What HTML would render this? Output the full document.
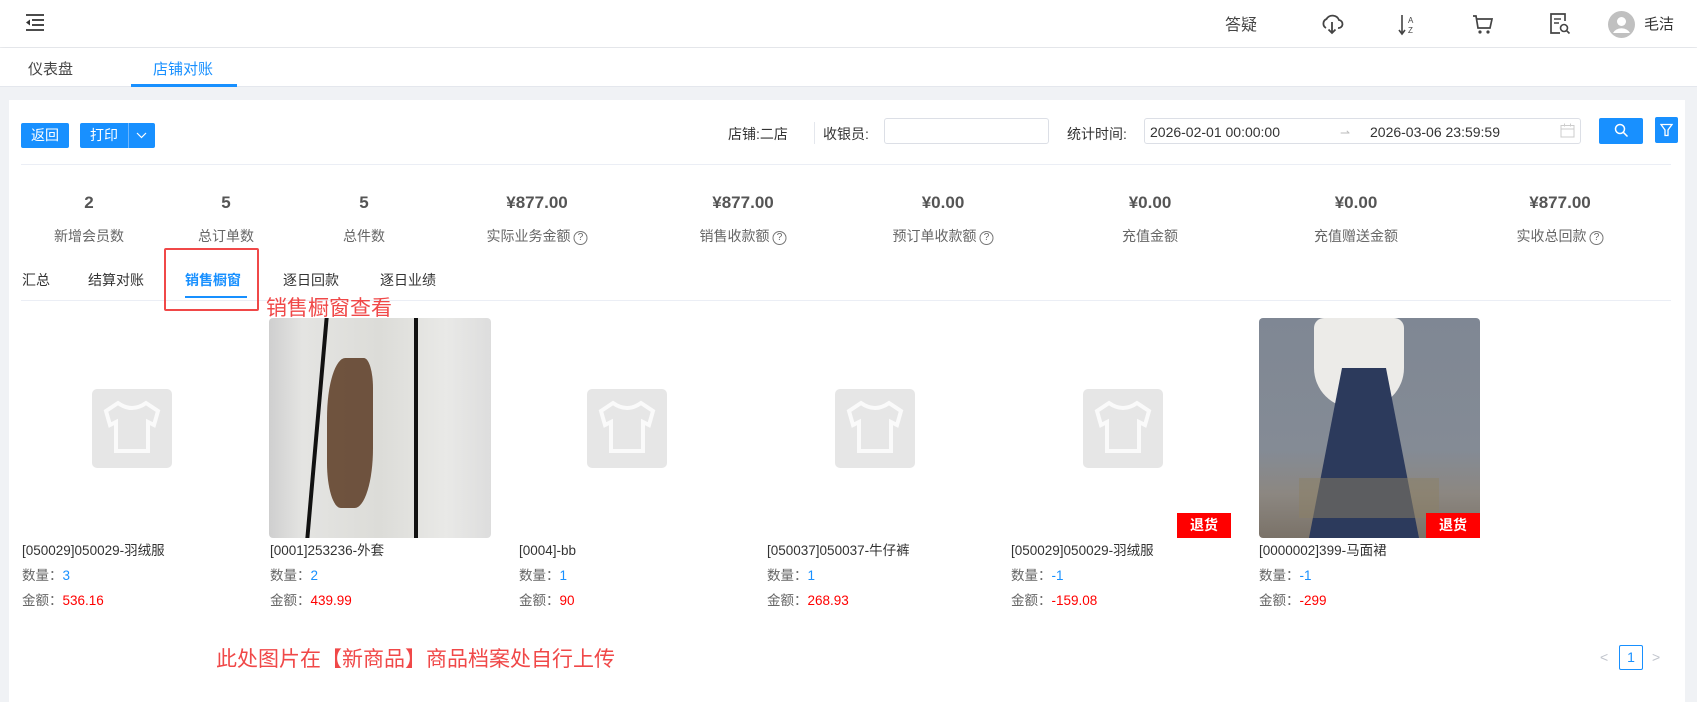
<!DOCTYPE html>
<html><head><meta charset="utf-8">
<style>
*{margin:0;padding:0;box-sizing:border-box}
body{width:1697px;height:702px;overflow:hidden;background:#f0f2f5;font-family:"Liberation Sans","Noto Sans CJK SC",sans-serif;font-size:14px;color:#333;position:relative}
.a{position:absolute;white-space:nowrap}
.hdr{position:absolute;left:0;top:0;width:1697px;height:47px;background:#fff;box-shadow:0 1px 4px rgba(0,0,0,.08)}
.tabs{position:absolute;left:0;top:48px;width:1697px;height:39px;background:#fff;border-bottom:1px solid #e4e7ed}
.card{position:absolute;left:9px;top:100px;width:1676px;height:602px;background:#fff}
.btn{position:absolute;background:#1890ff;color:#fff;border-radius:2px;font-size:14px;text-align:center;line-height:25px;height:25px;top:123px}
.inp{position:absolute;border:1px solid #dcdfe6;border-radius:3px;background:#fff}
.sv{position:absolute;top:193px;font-size:17px;color:#555;font-weight:bold;transform:translateX(-50%);white-space:nowrap}
.sl{position:absolute;top:226px;font-size:14px;color:#666;transform:translateX(-50%);white-space:nowrap}
.q{display:inline-block;width:14px;height:14px;border:1px solid #777;border-radius:50%;font-size:10px;line-height:12px;text-align:center;vertical-align:1px;margin-left:3px;color:#666}
.st{position:absolute;top:270px;font-size:14px;color:#333;white-space:nowrap}
.ph{position:absolute;width:80px;height:79px;background:#e6e6e6;border-radius:5px;top:389px}
.nm,.qt,.am{position:absolute;font-size:13.5px;white-space:nowrap;line-height:20px}
.nm{top:541px;color:#333}
.qt{top:566px;color:#666}
.qt span{color:#1890ff}
.am{top:591px;color:#666}
.am span{color:#f00}
.badge{position:absolute;width:54px;height:25px;background:#f00;color:#fff;font-weight:bold;font-size:14px;text-align:center;line-height:25px;top:513px}
</style></head><body>
<div class="hdr"></div>
<svg class="a" style="left:25px;top:12px" width="20" height="20" viewBox="0 0 20 20"><g stroke="#333" stroke-width="1.8"><line x1="1" y1="3" x2="19" y2="3"/><line x1="7" y1="8" x2="19" y2="8"/><line x1="7" y1="13" x2="19" y2="13"/><line x1="1" y1="18" x2="19" y2="18"/></g><path d="M1 10.5 L5 7.5 L5 13.5Z" fill="#333"/></svg>
<div class="a" style="left:1225px;top:11px;font-size:16px;color:#444">答疑</div>
<svg class="a" style="left:1320px;top:13px" width="24" height="22" viewBox="0 0 24 22"><path d="M6 15 A5 5 0 0 1 6.5 6 A7 7 0 0 1 19 7 A4 4 0 0 1 18 15" fill="none" stroke="#444" stroke-width="1.8"/><path d="M12 9 V20 M8.5 16.5 L12 20 L15.5 16.5" fill="none" stroke="#444" stroke-width="1.8"/></svg>
<svg class="a" style="left:1397px;top:13px" width="22" height="24" viewBox="0 0 22 24"><path d="M5 2 V20 M2 17 L5 21 L8 17" fill="none" stroke="#444" stroke-width="1.6"/><text x="11" y="10" font-size="8" font-family="Liberation Sans" fill="#444">A</text><text x="11" y="20" font-size="8" font-family="Liberation Sans" fill="#444">Z</text></svg>
<svg class="a" style="left:1472px;top:13px" width="22" height="22" viewBox="0 0 22 22"><path d="M1 3 H4 L6 15 H18 L20 6 H5" fill="none" stroke="#444" stroke-width="1.7"/><circle cx="8" cy="19" r="1.6" fill="#444"/><circle cx="16" cy="19" r="1.6" fill="#444"/></svg>
<svg class="a" style="left:1549px;top:12px" width="22" height="24" viewBox="0 0 22 24"><path d="M11 21 H2 V2 H16 V9" fill="none" stroke="#444" stroke-width="1.7"/><line x1="5" y1="7" x2="12" y2="7" stroke="#444" stroke-width="1.5"/><line x1="5" y1="11" x2="10" y2="11" stroke="#444" stroke-width="1.5"/><circle cx="15" cy="16" r="3.5" fill="none" stroke="#444" stroke-width="1.6"/><line x1="17.5" y1="18.5" x2="20.5" y2="21.5" stroke="#444" stroke-width="1.6"/></svg>
<svg class="a" style="left:1608px;top:11px" width="27" height="27" viewBox="0 0 27 27"><circle cx="13.5" cy="13.5" r="13.5" fill="#c0c0c0"/><circle cx="13.5" cy="10.5" r="4.5" fill="#fff"/><path d="M5 22 A9 7 0 0 1 22 22 Z" fill="#fff"/></svg>
<div class="a" style="left:1644px;top:13px;font-size:15px;color:#333">毛洁</div>

<div class="tabs"></div>
<div class="a" style="left:28px;top:58px;font-size:15px;color:#444">仪表盘</div>
<div class="a" style="left:153px;top:58px;font-size:15px;color:#1890ff">店铺对账</div>
<div class="a" style="left:131px;top:84px;width:106px;height:3px;background:#1890ff"></div>

<div class="card"></div>
<div class="btn" style="left:21px;width:48px">返回</div>
<div class="btn" style="left:80px;width:75px;text-align:left;padding-left:10px">打印<span style="position:absolute;left:48px;top:0;width:1px;height:25px;background:#6bb5ff"></span><svg style="position:absolute;left:56px;top:9px" width="11" height="7" viewBox="0 0 11 7"><path d="M1 1 L5.5 5.5 L10 1" fill="none" stroke="#fff" stroke-width="1.2"/></svg></div>
<div class="a" style="left:728px;top:124px;font-size:14px;color:#333">店铺:二店</div>
<div class="a" style="left:814px;top:122px;width:1px;height:22px;background:#e4e7ed"></div>
<div class="a" style="left:823px;top:124px;font-size:14px;color:#333">收银员:</div>
<div class="inp" style="left:884px;top:118px;width:165px;height:26px"></div>
<div class="a" style="left:1067px;top:124px;font-size:14px;color:#333">统计时间:</div>
<div class="inp" style="left:1144px;top:118px;width:437px;height:26px"></div>
<div class="a" style="left:1150px;top:124px;font-size:14px;color:#333">2026-02-01 00:00:00</div>
<div class="a" style="left:1340px;top:126px;font-size:12px;color:#bbb">⇀</div>
<div class="a" style="left:1370px;top:124px;font-size:14px;color:#333">2026-03-06 23:59:59</div>
<svg class="a" style="left:1560px;top:123px" width="15" height="15" viewBox="0 0 15 15"><rect x="1" y="2.5" width="13" height="11.5" fill="none" stroke="#ccc"/><line x1="1" y1="6" x2="14" y2="6" stroke="#ccc"/><line x1="4.5" y1="0.5" x2="4.5" y2="3.5" stroke="#ccc"/><line x1="10.5" y1="0.5" x2="10.5" y2="3.5" stroke="#ccc"/></svg>
<div class="a" style="left:1599px;top:118px;width:44px;height:26px;background:#1890ff;border-radius:2px"></div>
<svg class="a" style="left:1614px;top:123px" width="15" height="15" viewBox="0 0 15 15"><circle cx="6" cy="6" r="4.5" fill="none" stroke="#fff" stroke-width="1.5"/><line x1="9.3" y1="9.3" x2="13.5" y2="13.5" stroke="#fff" stroke-width="1.5"/></svg>
<div class="a" style="left:1655px;top:117px;width:23px;height:26px;background:#1890ff;border-radius:2px"></div>
<svg class="a" style="left:1660px;top:123px" width="13" height="14" viewBox="0 0 13 14"><path d="M1 1.5 H12 L8 7 V12.5 H5 V7 Z" fill="none" stroke="#fff" stroke-width="1.3"/></svg>
<div class="a" style="left:21px;top:164px;width:1650px;height:1px;background:#ebeef5"></div>

<div class="sv" style="left:89px">2</div><div class="sl" style="left:89px">新增会员数</div>
<div class="sv" style="left:226px">5</div><div class="sl" style="left:226px">总订单数</div>
<div class="sv" style="left:364px">5</div><div class="sl" style="left:364px">总件数</div>
<div class="sv" style="left:537px">¥877.00</div><div class="sl" style="left:537px">实际业务金额<span class="q">?</span></div>
<div class="sv" style="left:743px">¥877.00</div><div class="sl" style="left:743px">销售收款额<span class="q">?</span></div>
<div class="sv" style="left:943px">¥0.00</div><div class="sl" style="left:943px">预订单收款额<span class="q">?</span></div>
<div class="sv" style="left:1150px">¥0.00</div><div class="sl" style="left:1150px">充值金额</div>
<div class="sv" style="left:1356px">¥0.00</div><div class="sl" style="left:1356px">充值赠送金额</div>
<div class="sv" style="left:1560px">¥877.00</div><div class="sl" style="left:1560px">实收总回款<span class="q">?</span></div>

<div class="st" style="left:22px">汇总</div>
<div class="st" style="left:88px">结算对账</div>
<div class="st" style="left:185px;color:#1890ff;font-weight:bold">销售橱窗</div>
<div class="st" style="left:283px">逐日回款</div>
<div class="st" style="left:380px">逐日业绩</div>
<div class="a" style="left:21px;top:300px;width:1650px;height:1px;background:#ebeef5"></div>
<div class="a" style="left:185px;top:296px;width:62px;height:2px;background:#1890ff"></div>
<div class="a" style="left:164px;top:248px;width:95px;height:63px;border:2px solid #f04848;border-radius:2px"></div>
<div class="a" style="left:266px;top:292px;font-size:21px;color:#f04848">销售橱窗查看</div>

<!-- products -->
<div class="ph" style="left:92px"></div>
<div class="a" style="left:269px;top:318px;width:222px;height:220px;border-radius:4px;overflow:hidden;background:linear-gradient(90deg,#cfcfcf 0%,#e4e4e2 15%,#dcdcd8 50%,#e9e9e7 80%,#ddd 100%)">
<div style="position:absolute;left:46px;top:0;width:4px;height:220px;background:#111;transform:skewX(-5deg)"></div>
<div style="position:absolute;left:145px;top:0;width:4px;height:220px;background:#111"></div>
<div style="position:absolute;left:58px;top:40px;width:46px;height:150px;background:#5b3a22;border-radius:40% 20% 40% 30%;opacity:.85"></div>
</div>
<div class="ph" style="left:587px"></div>
<div class="ph" style="left:835px"></div>
<div class="ph" style="left:1083px"></div>
<div class="badge" style="left:1177px">退货</div>
<div class="a" style="left:1259px;top:318px;width:221px;height:220px;border-radius:4px;overflow:hidden;background:linear-gradient(180deg,#7f8794 0%,#848b95 60%,#8c8781 80%,#7a7268 100%)">
<div style="position:absolute;left:55px;top:0;width:90px;height:90px;background:#ecebe8;border-radius:10px 10px 40px 40px"></div>
<div style="position:absolute;left:50px;top:50px;width:110px;height:170px;background:#2c3a5c;clip-path:polygon(30% 0,70% 0,100% 100%,0 100%)"></div>
<div style="position:absolute;left:40px;top:160px;width:140px;height:40px;background:#8c7f63;opacity:.5"></div>
</div>
<div class="badge" style="left:1426px">退货</div>

<svg width="0" height="0" style="position:absolute"><defs><g id="sh"><path d="M14 22 L26 14 Q40 24 54 14 L66 22 L62 36 L56 33 V62 H24 V33 L18 36Z" fill="none" stroke="#fff" stroke-width="4" opacity=".8"/></g></defs></svg>
<svg class="a" style="left:92px;top:389px" width="80" height="79"><use href="#sh"/></svg>
<svg class="a" style="left:587px;top:389px" width="80" height="79"><use href="#sh"/></svg>
<svg class="a" style="left:835px;top:389px" width="80" height="79"><use href="#sh"/></svg>
<svg class="a" style="left:1083px;top:389px" width="80" height="79"><use href="#sh"/></svg>

<div class="nm" style="left:22px">[050029]050029-羽绒服</div><div class="qt" style="left:22px">数量：<span>3</span></div><div class="am" style="left:22px">金额：<span>536.16</span></div>
<div class="nm" style="left:270px">[0001]253236-外套</div><div class="qt" style="left:270px">数量：<span>2</span></div><div class="am" style="left:270px">金额：<span>439.99</span></div>
<div class="nm" style="left:519px">[0004]-bb</div><div class="qt" style="left:519px">数量：<span>1</span></div><div class="am" style="left:519px">金额：<span>90</span></div>
<div class="nm" style="left:767px">[050037]050037-牛仔裤</div><div class="qt" style="left:767px">数量：<span>1</span></div><div class="am" style="left:767px">金额：<span>268.93</span></div>
<div class="nm" style="left:1011px">[050029]050029-羽绒服</div><div class="qt" style="left:1011px">数量：<span>-1</span></div><div class="am" style="left:1011px">金额：<span>-159.08</span></div>
<div class="nm" style="left:1259px">[0000002]399-马面裙</div><div class="qt" style="left:1259px">数量：<span>-1</span></div><div class="am" style="left:1259px">金额：<span>-299</span></div>

<div class="a" style="left:216px;top:643px;font-size:21px;color:#f04848">此处图片在【新商品】商品档案处自行上传</div>
<div class="a" style="left:1600px;top:649px;font-size:14px;color:#c0c4cc">&lt;</div>
<div class="a" style="left:1619px;top:645px;width:24px;height:25px;border:1px solid #1890ff;border-radius:2px;color:#1890ff;text-align:center;line-height:23px;font-size:14px">1</div>
<div class="a" style="left:1652px;top:649px;font-size:14px;color:#c0c4cc">&gt;</div>
</body></html>
